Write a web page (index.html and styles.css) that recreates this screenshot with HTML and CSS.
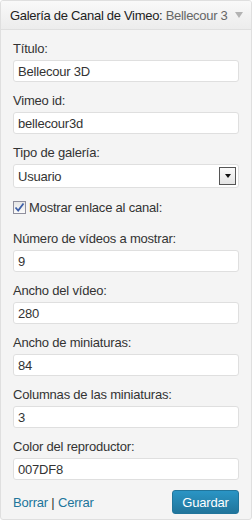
FILE: index.html
```html
<!DOCTYPE html>
<html lang="es">
<head>
    <meta charset="UTF-8">
    <title>Galería de Canal de Vimeo</title>
    <link rel="stylesheet" href="styles.css">
</head>
<body>
    <div class="widget">
        <div class="widget-top">
            <h4 class="widget-title"><span class="name">Galería de Canal de Vimeo:</span> <span class="in-title">Bellecour 3</span></h4>
            <span class="toggle"></span>
        </div>
        <div class="widget-inside">
            <div class="field">
                <label>Título:</label>
                <input class="text" type="text" value="Bellecour 3D">
            </div>
            <div class="field">
                <label>Vimeo id:</label>
                <input class="text" type="text" value="bellecour3d">
            </div>
            <div class="field">
                <label>Tipo de galería:</label>
                <div class="select">
                    <span>Usuario</span>
                    <span class="select-btn"><i></i></span>
                </div>
            </div>
            <div class="check-row">
                <span class="check">
                    <svg width="11" height="11" viewBox="0 0 11 11"><path d="M1.5 5.5 L4.2 8.5 L9.5 1.5" fill="none" stroke="#3d5fa8" stroke-width="1.8"/></svg>
                </span>
                <label>Mostrar enlace al canal:</label>
            </div>
            <div class="field">
                <label>Número de vídeos a mostrar:</label>
                <input class="text" type="text" value="9">
            </div>
            <div class="field">
                <label>Ancho del vídeo:</label>
                <input class="text" type="text" value="280">
            </div>
            <div class="field">
                <label>Ancho de miniaturas:</label>
                <input class="text" type="text" value="84">
            </div>
            <div class="field">
                <label>Columnas de las miniaturas:</label>
                <input class="text" type="text" value="3">
            </div>
            <div class="field">
                <label>Color del reproductor:</label>
                <input class="text" type="text" value="007DF8">
            </div>
            <div class="widget-control-actions">
                <div class="links"><a href="#">Borrar</a> | <a href="#">Cerrar</a></div>
                <button class="button-primary">Guardar</button>
            </div>
        </div>
    </div>
</body>
</html>
```

FILE: styles.css
```css
* {
    box-sizing: border-box;
}

body {
    margin: 0;
    background: #fff;
    font-family: "Liberation Sans", Arial, sans-serif;
    font-size: 13px;
    letter-spacing: -0.2px;
    color: #333;
}

.widget {
    width: 252px;
    height: 520px;
    border: 1px solid #dfdfdf;
    border-radius: 3px;
    background: #f4f4f4;
    overflow: hidden;
}

.widget-top {
    display: flex;
    align-items: center;
    height: 29px;
    padding: 0 8px 0 9px;
    background: linear-gradient(to bottom, #f9f9f9, #ececec);
    border-bottom: 1px solid #dfdfdf;
}

.widget-title {
    flex: 1;
    margin: 0;
    font-size: 13px;
    font-weight: normal;
    letter-spacing: -0.3px;
    white-space: nowrap;
    overflow: hidden;
}

.widget-title .name {
    color: #222;
}

.in-title {
    color: #666;
}

.toggle {
    width: 0;
    height: 0;
    margin-left: 6px;
    border-left: 4px solid transparent;
    border-right: 4px solid transparent;
    border-top: 6px solid #b3b3b3;
}

.widget-inside {
    padding: 10px 12px 0 12px;
}

.field {
    margin-bottom: 10px;
}

.field label {
    display: block;
    line-height: 18px;
    margin-bottom: 2px;
}

.text {
    display: block;
    width: 226px;
    height: 22px;
    margin: 0;
    padding: 2px 4px;
    border: 1px solid #dfdfdf;
    border-radius: 3px;
    background: #fff;
    font-family: inherit;
    font-size: 13px;
    letter-spacing: inherit;
    color: #333;
}

.select {
    display: flex;
    align-items: center;
    justify-content: space-between;
    width: 226px;
    height: 24px;
    padding: 0 2px 0 4px;
    border: 1px solid #dfdfdf;
    border-radius: 3px;
    background: #fff;
}

.select-btn {
    display: flex;
    align-items: center;
    justify-content: center;
    width: 17px;
    height: 18px;
    border: 1px solid #555;
    background: linear-gradient(to bottom, #fafafa, #e4e4e4);
}

.select-btn i {
    width: 0;
    height: 0;
    border-left: 3px solid transparent;
    border-right: 3px solid transparent;
    border-top: 4px solid #111;
}

.check-row {
    display: flex;
    align-items: center;
    height: 18px;
    margin: 8px 0 14px;
}

.check {
    display: flex;
    align-items: center;
    justify-content: center;
    width: 13px;
    height: 13px;
    margin-right: 3px;
    border: 1px solid #8f8f9d;
    background: linear-gradient(to bottom, #e6e6e6, #fafafa);
}

.widget-control-actions {
    display: flex;
    align-items: center;
    justify-content: space-between;
    margin-top: 8px;
    padding-bottom: 10px;
}

.links {
    color: #333;
}

.links a {
    color: #21759b;
    text-decoration: none;
}

.button-primary {
    width: 67px;
    height: 24px;
    padding: 0;
    border: 1px solid #21759b;
    border-radius: 3px;
    background: linear-gradient(to bottom, #2a95c5, #21759b);
    color: #fff;
    font-family: inherit;
    font-size: 13px;
    letter-spacing: inherit;
    cursor: pointer;
}
```
